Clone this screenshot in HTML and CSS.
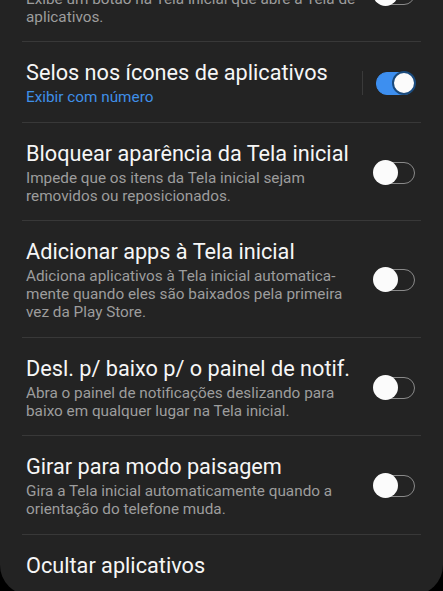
FILE: index.html
```html
<!DOCTYPE html>
<html lang="pt">
<head>
<meta charset="utf-8">
<link rel="stylesheet" href="styles.css">
</head>
<body>
<div class="card">
  <div class="row">
    <div class="text">
      <div class="title">Botão Tela de aplicativos</div>
      <div class="sub">Exibe um botão na Tela inicial que abre a Tela de aplicativos.</div>
    </div>
    <div class="switch"><span class="thumb"></span></div>
  </div>
  <div class="row">
    <div class="text">
      <div class="title">Selos nos ícones de aplicativos</div>
      <div class="sub blue">Exibir com número</div>
    </div>
    <div class="vsep"></div>
    <div class="switch on"><span class="thumb"></span></div>
  </div>
  <div class="row">
    <div class="text">
      <div class="title">Bloquear aparência da Tela inicial</div>
      <div class="sub">Impede que os itens da Tela inicial sejam removidos ou reposicionados.</div>
    </div>
    <div class="switch"><span class="thumb"></span></div>
  </div>
  <div class="row">
    <div class="text">
      <div class="title">Adicionar apps à Tela inicial</div>
      <div class="sub">Adiciona aplicativos à Tela inicial automatica-<br>mente quando eles são baixados pela primeira<br>vez da Play Store.</div>
    </div>
    <div class="switch"><span class="thumb"></span></div>
  </div>
  <div class="row">
    <div class="text">
      <div class="title">Desl. p/ baixo p/ o painel de notif.</div>
      <div class="sub">Abra o painel de notificações deslizando para<br>baixo em qualquer lugar na Tela inicial.</div>
    </div>
    <div class="switch"><span class="thumb"></span></div>
  </div>
  <div class="row">
    <div class="text">
      <div class="title">Girar para modo paisagem</div>
      <div class="sub">Gira a Tela inicial automaticamente quando a<br>orientação do telefone muda.</div>
    </div>
    <div class="switch"><span class="thumb"></span></div>
  </div>
  <div class="row last">
    <div class="text">
      <div class="title">Ocultar aplicativos</div>
    </div>
  </div>
</div>
</body>
</html>
```

FILE: styles.css
```css
html, body {
  margin: 0;
  padding: 0;
  background: #000;
  height: 591px;
  overflow: hidden;
}
body {
  font-family: Roboto, "Noto Sans", "Liberation Sans", sans-serif;
}
.card {
  background: #232323;
  border-radius: 0 0 30px 30px;
  margin-top: -56.5px;
  height: 651.5px;
  padding: 0 22px;
  box-sizing: border-box;
}
.row {
  display: flex;
  align-items: center;
  padding: 18px 0 15.5px 4px;
  border-bottom: 1px solid #383838;
}
.row.last {
  border-bottom: none;
}
.text {
  flex: 1;
  min-width: 0;
}
.title {
  color: #f6f6f6;
  font-size: 21.7px;
  line-height: 26px;
  white-space: nowrap;
}
.sub {
  color: #9d9d9d;
  font-size: 15.3px;
  line-height: 18px;
  margin-top: 2px;
  padding-right: 14px;
}
.sub.blue {
  color: #3f8fe8;
}
.vsep {
  width: 1px;
  height: 24px;
  background: #3a3a3a;
  margin-right: 13px;
}
.switch {
  position: relative;
  width: 41px;
  height: 22px;
  box-sizing: border-box;
  border: 1.5px solid #8a8a8a;
  border-radius: 11px;
  margin-right: 6px;
  flex: none;
}
.switch .thumb {
  position: absolute;
  left: -2px;
  top: -3px;
  width: 25px;
  height: 25px;
  border-radius: 50%;
  background: #fbfbfb;
}
.switch.on {
  background: #3d8ff0;
  border-color: #3d8ff0;
  height: 23px;
  width: 39px;
}
.switch.on .thumb {
  left: auto;
  right: -2px;
  top: -2px;
  width: 24px;
  height: 24px;
  box-sizing: border-box;
  border: 2px solid #1a4a7c;
}
```
